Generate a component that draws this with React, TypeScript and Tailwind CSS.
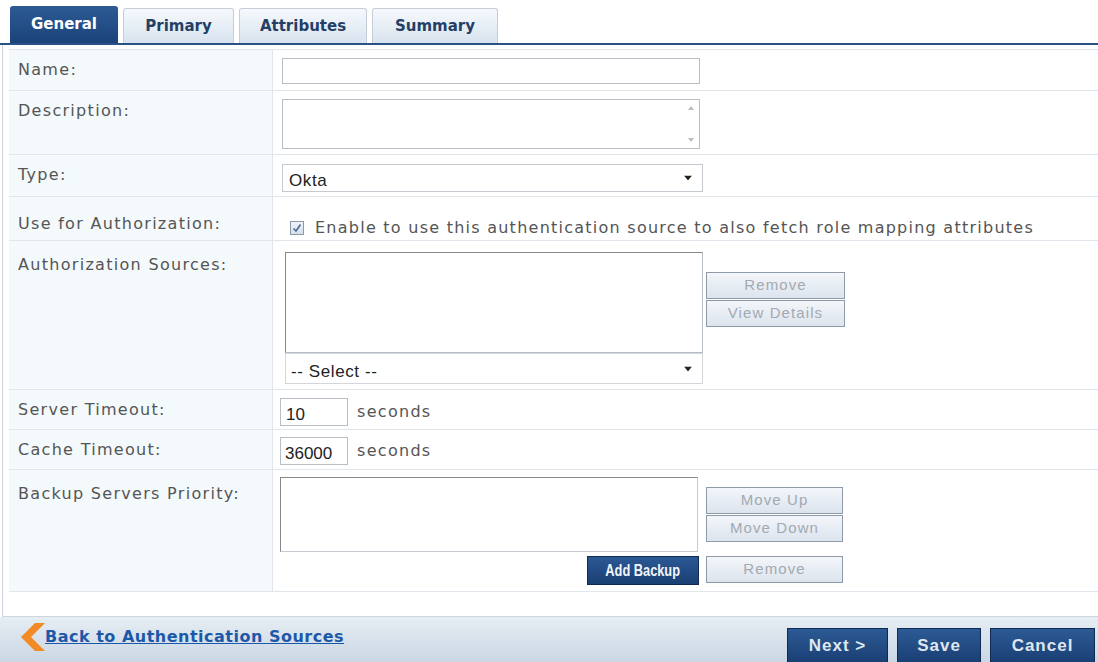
import React from "react";

const sans = { fontFamily: '"DejaVu Sans", Verdana, sans-serif' };
const arial = { fontFamily: '"Liberation Sans", Arial, sans-serif' };

function Tab({ label, active, width }: { label: string; active?: boolean; width: string }) {
  if (active) {
    return (
      <div
        className={`${width} h-[37px] flex items-center justify-center rounded-t-[3px] bg-gradient-to-b from-[#2d5a95] to-[#1b437a] text-white font-bold text-[15px]`}
        style={sans}
      >
        {label}
      </div>
    );
  }
  return (
    <div
      className={`${width} h-[35px] flex items-center justify-center rounded-t-[3px] border border-b-0 border-[#c3ceda] bg-gradient-to-b from-[#f6f9fc] to-[#d8e3ef] text-[#243f66] font-bold text-[15px]`}
      style={sans}
    >
      {label}
    </div>
  );
}

function GrayButton({ label, width = "w-[139px]" }: { label: string; width?: string }) {
  return (
    <div
      className={`${width} h-[27px] flex items-center justify-center border border-[#8e9aa8] bg-gradient-to-b from-[#f3f6fa] to-[#dce4ee] text-[#a3a9b0] text-[15px] tracking-[1.1px]`}
      style={arial}
    >
      {label}
    </div>
  );
}

function Arrow() {
  return (
    <svg width="8" height="5" viewBox="0 0 8 5" className="absolute right-[10px] top-1/2 -translate-y-1/2">
      <path d="M0 0 L8 0 L4 5 Z" fill="#222" />
    </svg>
  );
}

function Row({
  label,
  height,
  labelPad = "pt-[10px]",
  children,
}: {
  label: string;
  height: string;
  labelPad?: string;
  children: React.ReactNode;
}) {
  return (
    <div className={`grid grid-cols-[264px_1fr] ${height} border-b border-[#e1e6ec]`}>
      <div
        className={`bg-[#f4f9fc] border-r border-[#e1e6ec] pl-[9px] ${labelPad} text-[16px] tracking-[1.3px] text-[#555] whitespace-nowrap`}
        style={sans}
      >
        {label}
      </div>
      <div className="relative">{children}</div>
    </div>
  );
}

export default function App() {
  return (
    <div className="w-[1098px] h-[662px] bg-white overflow-hidden flex flex-col">
      {/* tabs */}
      <div className="flex items-end gap-[5px] pl-[10px] pt-[6px] border-b-2 border-[#2a5186]">
        <Tab label="General" active width="w-[108px]" />
        <Tab label="Primary" width="w-[111px]" />
        <Tab label="Attributes" width="w-[128px]" />
        <Tab label="Summary" width="w-[126px]" />
      </div>

      {/* form */}
      <div className="ml-[2px] border-l border-b border-[#cfd5dc] pl-[6px] pt-[4px] pb-[24px]">
        <div className="border-t border-[#e1e6ec]">
          <Row label="Name:" height="h-[41px]" labelPad="pt-[8px]">
            <div className="absolute left-[9px] top-[8px] w-[418px] h-[26px] border border-[#b8bec6] bg-white" />
          </Row>
          <Row label="Description:" height="h-[64px]" labelPad="pt-[8px]">
            <div className="absolute left-[9px] top-[8px] w-[418px] h-[50px] border border-[#b8bec6] bg-white">
              <div className="absolute right-0 top-0 w-[16px] h-full flex flex-col items-center justify-between py-[6px]">
                <svg width="6" height="4" viewBox="0 0 6 4"><path d="M0 4 L6 4 L3 0 Z" fill="#b8bec6" /></svg>
                <svg width="6" height="4" viewBox="0 0 6 4"><path d="M0 0 L6 0 L3 4 Z" fill="#b8bec6" /></svg>
              </div>
            </div>
          </Row>
          <Row label="Type:" height="h-[42px]" labelPad="pt-[8px]">
            <div
              className="absolute left-[9px] top-[9px] w-[421px] h-[28px] border border-[#c5cad0] bg-white pl-[6px] pt-[3px] text-[17px] tracking-[0.6px] text-[#222]"
              style={arial}
            >
              Okta
              <Arrow />
            </div>
          </Row>
          <Row label="Use for Authorization:" height="h-[44px]" labelPad="pt-[15px]">
            <div className="absolute left-[17px] top-[19px] flex items-center gap-[11px]">
              <div className="w-[14px] h-[14px] border border-[#8c99a8] bg-gradient-to-b from-[#eef3f8] to-[#d5e0ec] flex items-center justify-center">
                <svg width="10" height="10" viewBox="0 0 10 10">
                  <path d="M1.5 5.5 L4 8 L8.5 1.5" stroke="#4a6a98" strokeWidth="1.6" fill="none" />
                </svg>
              </div>
              <span className="text-[16px] tracking-[1.25px] text-[#555] whitespace-nowrap" style={sans}>
                Enable to use this authentication source to also fetch role mapping attributes
              </span>
            </div>
          </Row>
          <Row label="Authorization Sources:" height="h-[149px]" labelPad="pt-[12px]">
            <div className="absolute left-[12px] top-[11px] w-[418px] h-[101px] border border-[#b8bec6] border-t-[#888] border-l-[#888] bg-white" />
            <div
              className="absolute left-[12px] top-[112px] w-[418px] h-[31px] border border-[#d3d7dc] bg-white pl-[5px] pt-[5px] text-[17px] tracking-[0.6px] text-[#222]"
              style={arial}
            >
              -- Select --
              <Arrow />
            </div>
            <div className="absolute left-[433px] top-[31px] flex flex-col gap-[1px]">
              <GrayButton label="Remove" />
              <GrayButton label="View Details" />
            </div>
          </Row>
          <Row label="Server Timeout:" height="h-[40px]" labelPad="pt-[8px]">
            <div className="absolute left-[7px] top-[8px] flex items-center gap-[9px]">
              <div
                className="w-[68px] h-[28px] border border-[#b8bec6] bg-white pl-[5px] pt-[3px] text-[17px] text-[#222]"
                style={arial}
              >
                10
              </div>
              <span className="text-[16px] tracking-[1.3px] text-[#555]" style={sans}>seconds</span>
            </div>
          </Row>
          <Row label="Cache Timeout:" height="h-[40px]" labelPad="pt-[8px]">
            <div className="absolute left-[7px] top-[7px] flex items-center gap-[9px]">
              <div
                className="w-[68px] h-[28px] border border-[#b8bec6] bg-white pl-[4px] pt-[3px] text-[17px] text-[#222]"
                style={arial}
              >
                36000
              </div>
              <span className="text-[16px] tracking-[1.3px] text-[#555]" style={sans}>seconds</span>
            </div>
          </Row>
          <Row label="Backup Servers Priority:" height="h-[122px]" labelPad="pt-[12px]">
            <div className="absolute left-[7px] top-[7px] w-[418px] h-[75px] border border-[#c5cad0] border-t-[#888] border-l-[#888] bg-white" />
            <div className="absolute left-[433px] top-[17px] flex flex-col gap-[1px]">
              <GrayButton label="Move Up" width="w-[137px]" />
              <GrayButton label="Move Down" width="w-[137px]" />
            </div>
            <div className="absolute left-[314px] top-[86px] w-[112px] h-[29px] flex items-center justify-center border border-[#0f2b52] bg-gradient-to-b from-[#2b5894] to-[#1a3f73]">
              <span className="inline-block scale-x-[0.8] text-[#f2f5f9] font-bold text-[16px] whitespace-nowrap" style={arial}>
                Add Backup
              </span>
            </div>
            <div className="absolute left-[433px] top-[86px]">
              <GrayButton label="Remove" width="w-[137px]" />
            </div>
          </Row>
        </div>
      </div>

      {/* footer */}
      <div className="flex-1 flex items-start justify-between bg-gradient-to-b from-[#e6edf4] to-[#c9d6e3]">
        <div className="flex items-center pl-[18px] pt-[5px]">
          <svg width="27" height="30" viewBox="0 0 27 30">
            <path d="M17 1 L27 1 L13 15 L27 29 L17 29 L3 15 Z" fill="#f28a25" />
          </svg>
          <span className="text-[16px] tracking-[0.5px] font-bold text-[#1d58a8] underline" style={sans}>
            Back to Authentication Sources
          </span>
        </div>
        <div className="flex gap-[9px] pt-[11px] pr-[3px]">
          {[
            ["Next >", "w-[101px]"],
            ["Save", "w-[84px]"],
            ["Cancel", "w-[105px]"],
          ].map(([l, w]) => (
            <div
              key={l}
              className={`${w} h-[36px] flex items-center justify-center border border-[#0f2b52] bg-gradient-to-b from-[#2d5a95] to-[#1a3f73] text-[#dfe7f1] font-bold text-[17px] tracking-[1px]`}
              style={arial}
            >
              {l}
            </div>
          ))}
        </div>
      </div>
    </div>
  );
}
